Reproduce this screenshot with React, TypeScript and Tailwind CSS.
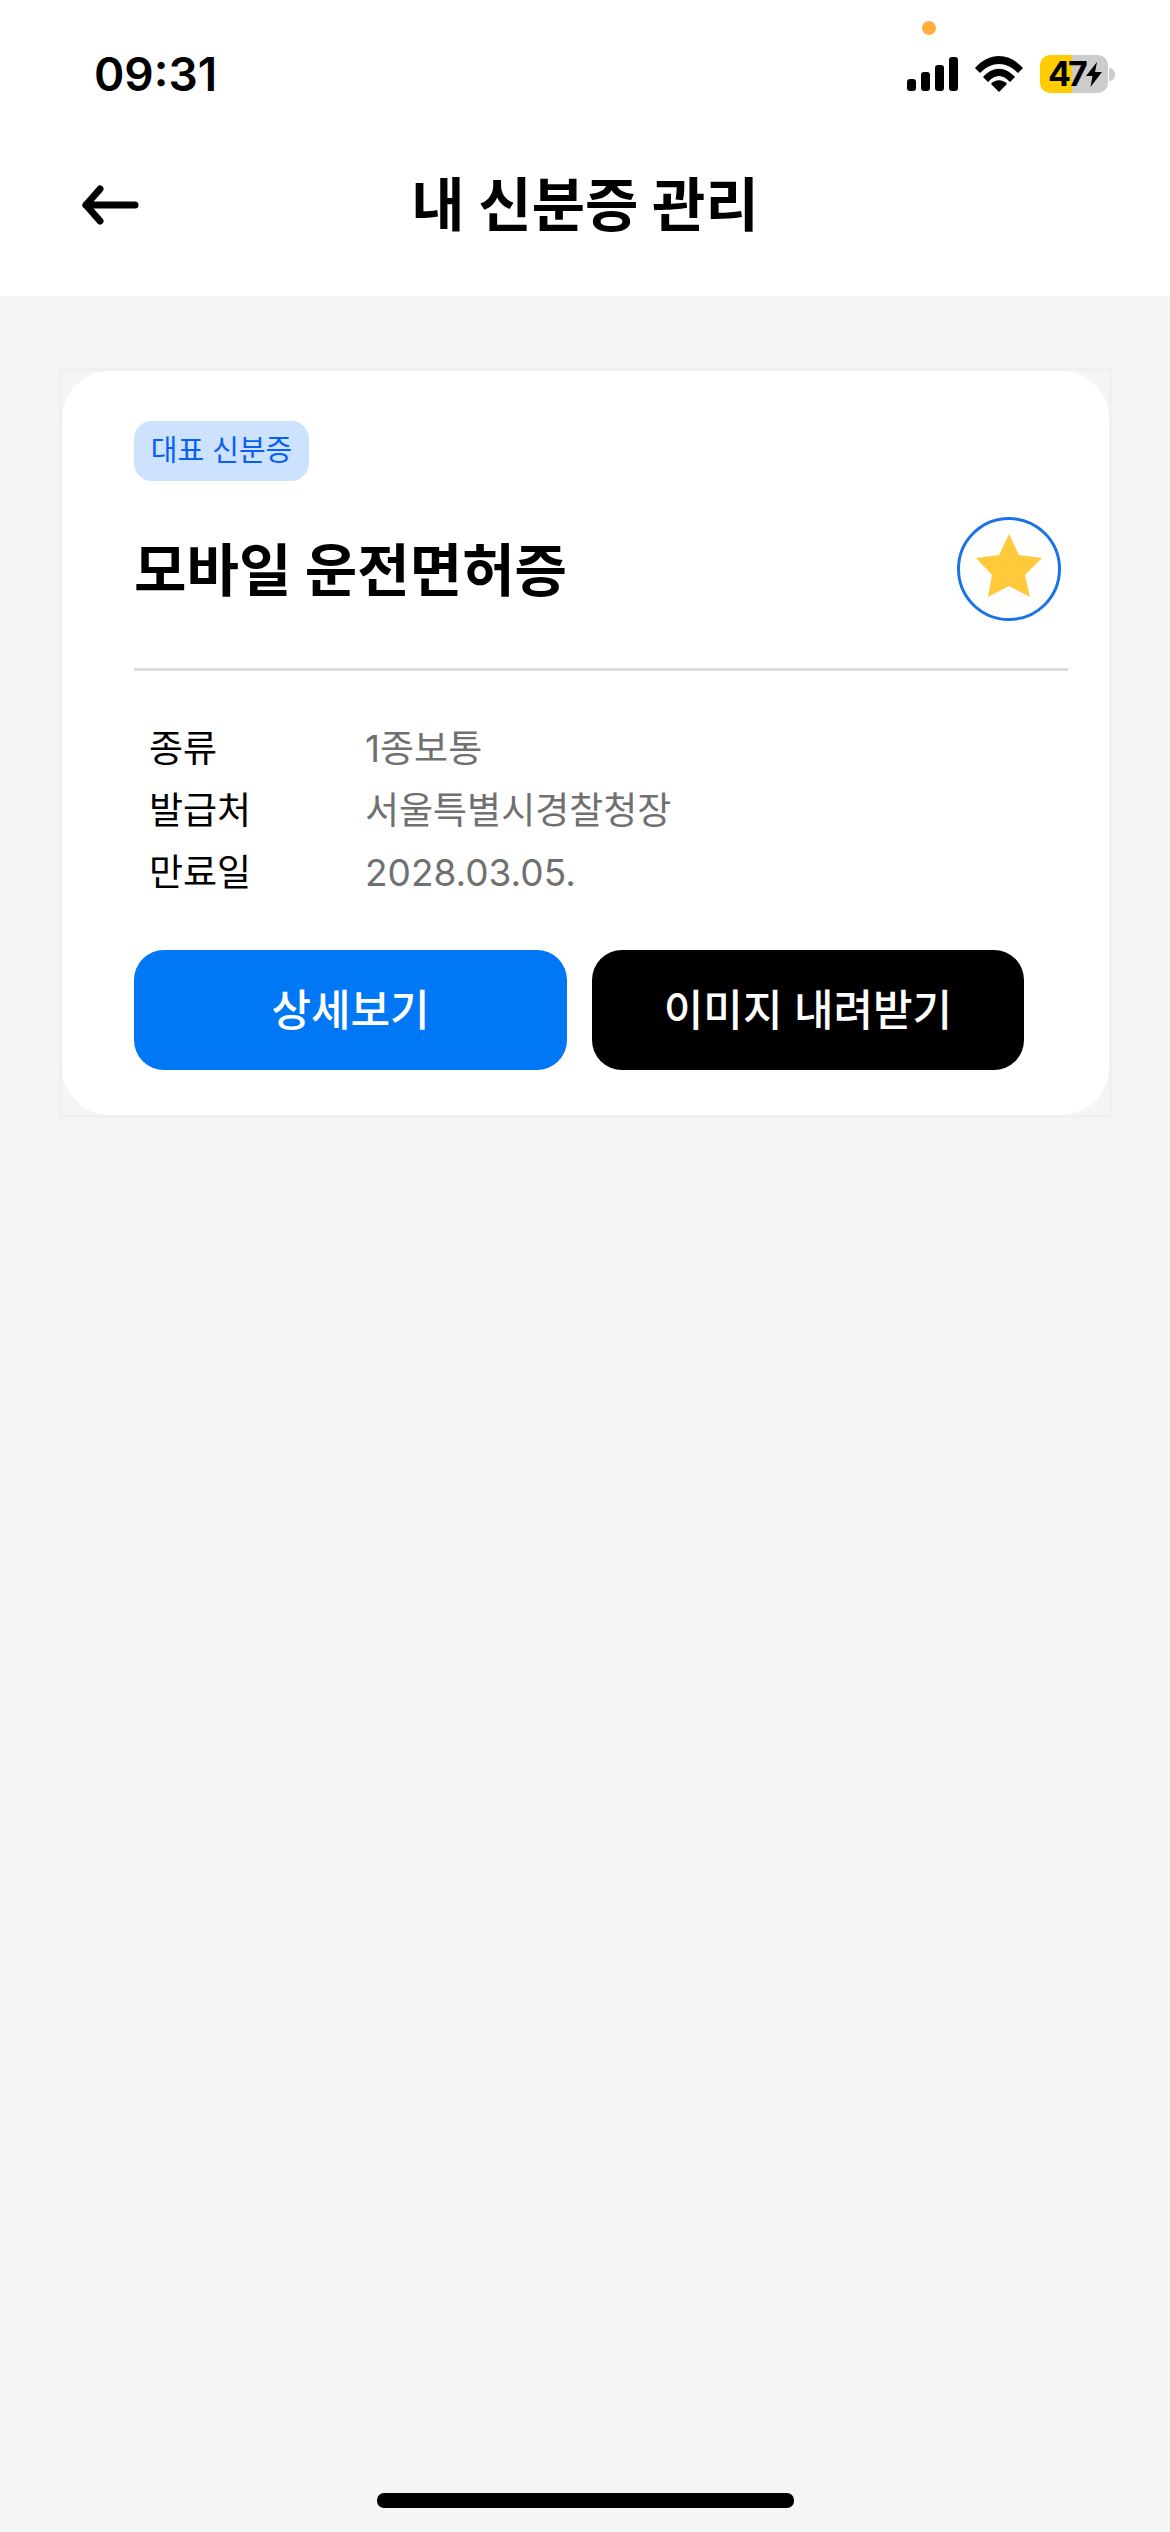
const FONT = "font-['Inter','Noto_Sans_CJK_KR',sans-serif]"

const INFO_ROWS = [
  { label: '종류', value: '1종보통' },
  { label: '발급처', value: '서울특별시경찰청장' },
  { label: '만료일', value: '2028.03.05.' },
]

function StatusBar() {
  return (
    <div className="relative flex h-[98px] items-center justify-between bg-white pl-[94px] pr-[55px] pt-[50px]">
      {/* Recording dot */}
      <div className="absolute left-[922px] top-[21px] h-[14px] w-[14px] rounded-full bg-[#ffae3b]" />
      <span className="text-[46px] leading-[46px] font-semibold text-black">09:31</span>
      <div className="flex items-center gap-[17px]">
        <svg width="51" height="34" viewBox="0 0 51 34" fill="black">
          <rect x="0" y="22" width="9" height="12" rx="3" />
          <rect x="14" y="15" width="9" height="19" rx="3" />
          <rect x="28" y="8" width="9" height="26" rx="3" />
          <rect x="42" y="0" width="9" height="34" rx="3" />
        </svg>
        <svg width="48" height="36" viewBox="0 0 48 36" fill="black">
          <path d="M0 12 C14 -4 34 -4 48 12 L43 17 C31 5 17 5 5 17 Z" />
          <path d="M8 21 C18 10 30 10 40 21 L35 26 C28 18 20 18 13 26 Z" />
          <path d="M24 36 L16 28 C20 23 28 23 32 28 Z" />
        </svg>
        <div className="flex items-center">
          <div className="flex h-[38px] w-[68px] items-center rounded-[10px] bg-[linear-gradient(90deg,#ffcc00_47%,#cccccc_47%)] pl-[8px]">
            <span className="w-[38px] text-[34px] leading-none font-bold tracking-[-3px] text-black">47</span>
            <svg width="16" height="25" viewBox="0 0 16 25" fill="black">
              <path d="M11 0 L0 14 H6.5 L4.5 25 L16 10 H9 Z" />
            </svg>
          </div>
          <div className="ml-[1px] h-[13px] w-[6px] rounded-r-full bg-[#cccccc]" />
        </div>
      </div>
    </div>
  )
}

function Header() {
  return (
    <div className="relative flex h-[198px] items-center justify-center bg-white pt-[16px]">
      <svg
        className="absolute left-[80px] top-[86px]"
        width="60"
        height="42"
        viewBox="0 0 60 42"
        fill="none"
        stroke="black"
        strokeWidth="7"
        strokeLinecap="round"
        strokeLinejoin="round"
      >
        <path d="M55 21 H6" />
        <path d="M20 5 L6 21 L20 37" />
      </svg>
      <h1 className="text-[58px] leading-none font-bold text-black">내 신분증 관리</h1>
    </div>
  )
}

function StarBadge() {
  return (
    <div className="flex h-[104px] w-[104px] items-center justify-center rounded-full border-[3px] border-[#1a73e8]">
      <svg className="mb-[6px]" width="66" height="64" viewBox="0 0 66 64" fill="#ffc93c">
        <path d="M33 0 L43 21 L66 24 L49 41 L54 63 L33 52 L12 63 L16 41 L0 24 L23 21 Z" />
      </svg>
    </div>
  )
}

function LicenseCard() {
  return (
    <div className="ml-[59px] mr-[58px] mt-[72px] border-[3px] border-[#f0f0f1]">
      <div className="rounded-[48px] bg-white pb-[45px] pl-[72px] pt-[50px]">
        <div className="flex h-[60px] w-[175px] items-center justify-center rounded-[18px] bg-[#cce2ff] text-[29px] text-[#0a5ff0]">
          대표 신분증
        </div>
        <div className="mt-[36px] flex h-[104px] items-center justify-between pr-[48px]">
          <h2 className="pt-[3px] text-[57px] leading-none font-bold text-black">모바일 운전면허증</h2>
          <StarBadge />
        </div>
        <div className="mt-[47px] mr-[41px] h-[3px] bg-[#dddddd]" />
        <div className="mt-[46px] flex flex-col pl-[15px]">
          {INFO_ROWS.map((row) => (
            <div key={row.label} className="flex h-[62px] items-center text-[37px] leading-none">
              <span className="w-[216px] text-black">{row.label}</span>
              <span className="text-[#707070]">{row.value}</span>
            </div>
          ))}
        </div>
        <div className="mt-[47px] flex gap-[25px]">
          <button className="h-[120px] w-[433px] rounded-[30px] bg-[#0077f5] text-[43px] font-medium text-white">
            상세보기
          </button>
          <button className="h-[120px] w-[432px] rounded-[30px] bg-black text-[43px] font-medium text-white">
            이미지 내려받기
          </button>
        </div>
      </div>
    </div>
  )
}

export default function App() {
  return (
    <div className={`flex h-[2532px] flex-col bg-[#f4f5f7] ${FONT}`}>
      <StatusBar />
      <Header />
      <LicenseCard />
      <div className="mt-auto mb-[24px] h-[15px] w-[417px] self-center rounded-[7px] bg-black" />
    </div>
  )
}
